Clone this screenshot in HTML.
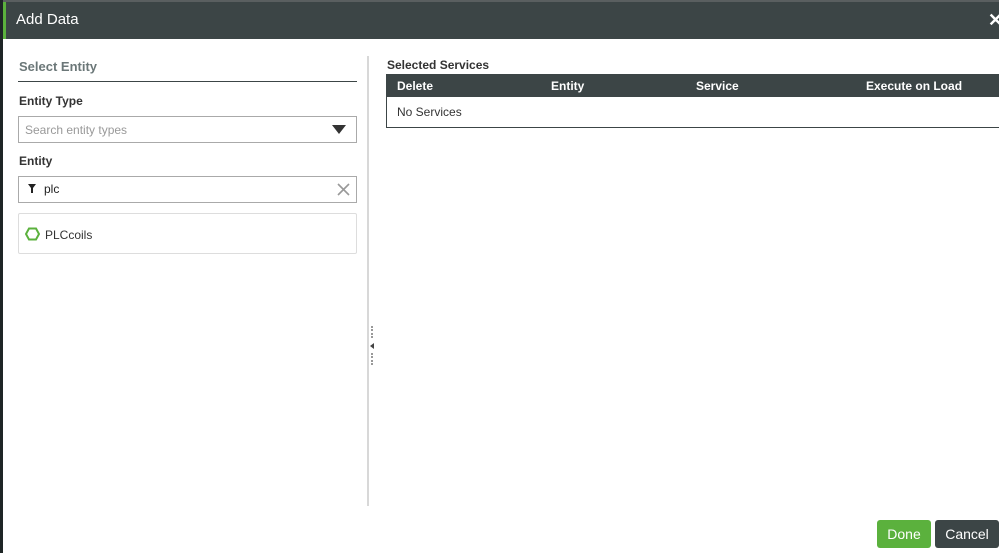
<!DOCTYPE html>
<html><head><style>
*{box-sizing:border-box;margin:0;padding:0}
body{width:999px;height:553px;overflow:hidden;background:#fff;font-family:"Liberation Sans",Arial,sans-serif;position:relative}
.abs{position:absolute}
</style></head><body>
<div class="abs" style="left:0;top:0;width:999px;height:2px;background:#5a5f60"></div>
<div class="abs" style="left:0;top:0;width:3px;height:553px;background:#1e2526"></div>
<div class="abs" style="left:3px;top:2px;width:996px;height:37px;background:#3c4546"></div>
<div class="abs" style="left:3px;top:2px;width:3px;height:37px;background:#5bb13d"></div>
<div class="abs" style="left:16px;top:11px;color:#fff;font-size:15px">Add Data</div>
<div class="abs" style="left:988px;top:10px;color:#fff;font-size:18px;font-weight:bold">✕</div>

<div class="abs" style="left:19px;top:59px;color:#6b7778;font-size:13px;font-weight:bold">Select Entity</div>
<div class="abs" style="left:18px;top:81px;width:339px;height:1px;background:#3c4546"></div>
<div class="abs" style="left:19px;top:94px;color:#333;font-size:12px;font-weight:bold">Entity Type</div>
<div class="abs" style="left:18px;top:116px;width:339px;height:27px;border:1px solid #aaa"></div>
<div class="abs" style="left:25px;top:123px;color:#999;font-size:12px">Search entity types</div>
<div class="abs" style="left:332px;top:125px;width:0;height:0;border-left:7px solid transparent;border-right:7px solid transparent;border-top:9px solid #333"></div>
<div class="abs" style="left:19px;top:154px;color:#333;font-size:12px;font-weight:bold">Entity</div>
<div class="abs" style="left:18px;top:176px;width:339px;height:27px;border:1px solid #aaa"></div>
<svg class="abs" style="left:28px;top:184px" width="8" height="9"><path d="M0 0H8L5 4V9H3V4Z" fill="#222"/></svg>
<div class="abs" style="left:44px;top:182px;color:#222;font-size:12px">plc</div>
<svg class="abs" style="left:337px;top:183px" width="13" height="13"><path d="M1 1L12 12M12 1L1 12" stroke="#999" stroke-width="1.6"/></svg>
<div class="abs" style="left:18px;top:213px;width:339px;height:41px;border:1px solid #ddd;border-radius:2px"></div>
<svg class="abs" style="left:25px;top:227px" width="15" height="14"><path d="M4 1.5H11L14 7L11 12.5H4L1 7Z" fill="none" stroke="#5bb13d" stroke-width="2"/></svg>
<div class="abs" style="left:45px;top:228px;color:#333;font-size:12px">PLCcoils</div>

<div class="abs" style="left:367px;top:56px;width:2px;height:450px;background:#d8d8d8"></div>
<div class="abs" style="left:371px;top:326px;width:2px;height:12px;border-left:2px dotted #999"></div>
<div class="abs" style="left:370px;top:343px;width:0;height:0;border-top:3px solid transparent;border-bottom:3px solid transparent;border-right:4px solid #444"></div>
<div class="abs" style="left:371px;top:353px;width:2px;height:12px;border-left:2px dotted #999"></div>

<div class="abs" style="left:387px;top:58px;color:#333;font-size:12px;font-weight:bold">Selected Services</div>
<div class="abs" style="left:386px;top:74px;width:613px;height:54px;border:1px solid #3c4546;border-right:none"></div>
<div class="abs" style="left:386px;top:74px;width:613px;height:23px;background:#3c4546"></div>
<div class="abs" style="left:397px;top:79px;color:#fff;font-size:12px;font-weight:bold">Delete</div>
<div class="abs" style="left:551px;top:79px;color:#fff;font-size:12px;font-weight:bold">Entity</div>
<div class="abs" style="left:696px;top:79px;color:#fff;font-size:12px;font-weight:bold">Service</div>
<div class="abs" style="left:866px;top:79px;color:#fff;font-size:12px;font-weight:bold">Execute on Load</div>
<div class="abs" style="left:397px;top:105px;color:#333;font-size:12px">No Services</div>

<div class="abs" style="left:877px;top:520px;width:54px;height:28px;background:#5bb13d;border-radius:3px;color:#fff;font-size:14px;text-align:center;line-height:28px">Done</div>
<div class="abs" style="left:935px;top:520px;width:64px;height:28px;background:#3c4546;border-radius:3px;color:#fff;font-size:14px;text-align:center;line-height:28px">Cancel</div>
</body></html>
